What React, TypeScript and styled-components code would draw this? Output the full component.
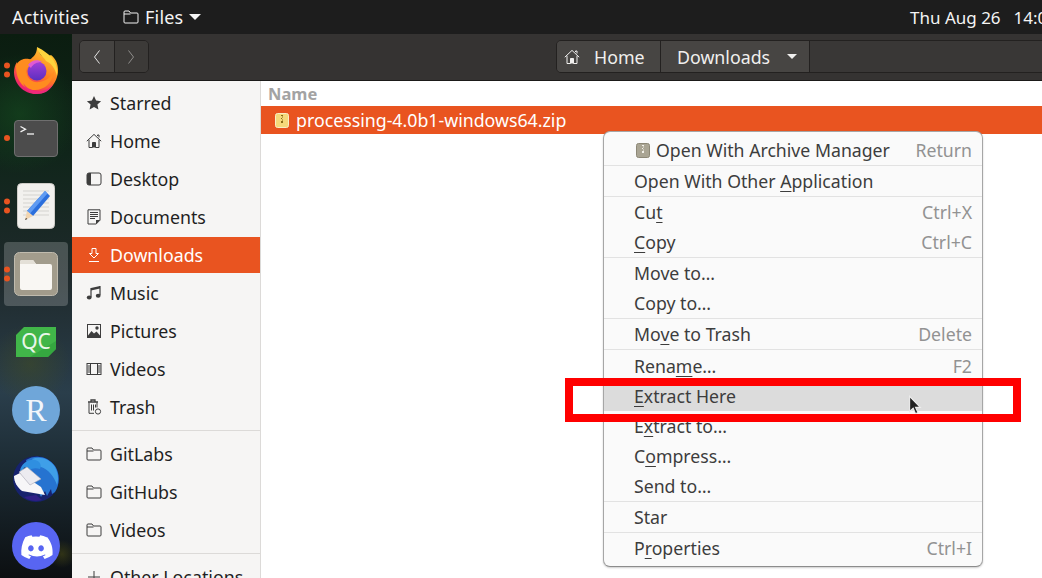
import React from "react";
import styled, { createGlobalStyle } from "styled-components";

const FONT = `"Noto Sans", "Open Sans", "DejaVu Sans", sans-serif`;

const GlobalStyle = createGlobalStyle`
  html, body {
    margin: 0;
    padding: 0;
    background: #000;
    overflow: hidden;
  }
  body {
    font-family: ${FONT};
  }
`;

const Screen = styled.div`
  position: relative;
  width: 1042px;
  height: 578px;
  overflow: hidden;
  display: grid;
  grid-template-rows: 34px 1fr;
  font-family: ${FONT};
`;

const TopBar = styled.div`
  display: grid;
  grid-template-columns: 910px 1fr;
  align-items: center;
  background: #1d1d1d;
  color: #f4f4f4;
  font-size: 17px;
  white-space: nowrap;
  overflow: hidden;
`;

const TopLeft = styled.div`
  display: flex;
  align-items: center;
  padding-left: 12px;
  font-size: 18px;
  letter-spacing: 0.2px;
`;

const Activities = styled.span`
  width: 111px;
`;

const AppMenu = styled.span`
  display: flex;
  align-items: center;
  gap: 6px;
`;

const Caret = styled.span<{ $color?: string }>`
  display: inline-block;
  width: 0;
  height: 0;
  border-left: 6px solid transparent;
  border-right: 6px solid transparent;
  border-top: 6px solid ${(p) => p.$color || "#f4f4f4"};
`;

const PathCaret = styled(Caret)`
  margin-left: 3px;
  border-left-width: 5px;
  border-right-width: 5px;
  border-top-width: 5px;
`;

const Clock = styled.span`
  display: flex;
  gap: 13px;
`;

const Main = styled.div`
  display: flex;
  min-height: 0;
`;

const Dock = styled.div`
  flex: 0 0 72px;
  display: flex;
  flex-direction: column;
  gap: 4px;
  padding: 4px 0 0 4px;
  box-sizing: border-box;
  background:
    radial-gradient(circle at 30px 330px, rgba(70, 80, 30, 0.45), transparent 40px),
    radial-gradient(circle at 62px 520px, rgba(80, 80, 20, 0.5), transparent 14px),
    radial-gradient(circle at 20px 80px, rgba(20, 70, 30, 0.7), transparent 60px),
    linear-gradient(180deg, #0b1d10 0%, #10251a 22%, #1f2a2c 45%, #2a3e4b 66%, #1a2830 82%, #0c0f11 100%);
  overflow: hidden;
`;

const DockItem = styled.div<{ $active?: boolean }>`
  position: relative;
  flex: 0 0 64px;
  width: 64px;
  height: 64px;
  display: flex;
  align-items: center;
  justify-content: center;
  border-radius: 4px;
  background: ${(p) => (p.$active ? "rgba(255, 255, 255, 0.2)" : "transparent")};
`;

const Dots = styled.div`
  position: absolute;
  left: 0;
  top: 50%;
  transform: translateY(-50%);
  display: flex;
  flex-direction: column;
  gap: 3px;
`;

const Dot = styled.span`
  width: 6px;
  height: 6px;
  border-radius: 50%;
  background: #e95420;
`;

const Window = styled.div`
  flex: 1;
  display: flex;
  flex-direction: column;
  min-width: 0;
`;

const HeaderBar = styled.div`
  flex: 0 0 47px;
  box-sizing: border-box;
  display: grid;
  grid-template-columns: 484px 1fr;
  align-items: start;
  padding-top: 6px;
  background: #353332;
  border-bottom: 1px solid #1b1a19;
  color: #f0efee;
  font-size: 17.8px;
`;

const NavGroup = styled.div`
  display: flex;
  width: 70px;
  height: 33px;
  margin-left: 7px;
  box-sizing: border-box;
  border: 1px solid #232120;
  border-radius: 5px;
  overflow: hidden;
`;

const NavButton = styled.div<{ $dim?: boolean }>`
  flex: 1;
  display: flex;
  align-items: center;
  justify-content: center;
  background: #454341;
  color: ${(p) => (p.$dim ? "#8f8e8c" : "#e6e5e4")};
  & + & {
    border-left: 1px solid #232120;
    background: #3c3a38;
  }
`;

const PathBar = styled.div`
  display: flex;
  height: 33px;
  margin-right: -12px;
  box-sizing: border-box;
  border: 1px solid #232120;
  border-radius: 5px;
  background: #393736;
  overflow: hidden;
`;

const PathSegment = styled.div<{ $width: number; $inset: number }>`
  flex: 0 0 ${(p) => p.$width}px;
  box-sizing: border-box;
  display: flex;
  align-items: center;
  background: #474543;
  border-right: 1px solid #232120;
  padding-left: ${(p) => p.$inset}px;
  gap: 14px;
`;

const Body = styled.div`
  flex: 1;
  display: flex;
  min-height: 0;
`;

const Sidebar = styled.div`
  flex: 0 0 189px;
  box-sizing: border-box;
  display: flex;
  flex-direction: column;
  gap: 2px;
  padding-top: 4px;
  background: #f6f5f4;
  border-right: 1px solid #dcdad8;
  overflow: hidden;
  color: #1f1f1f;
  font-size: 17.8px;
`;

const SideRow = styled.div<{ $selected?: boolean }>`
  flex: 0 0 36px;
  display: flex;
  align-items: center;
  gap: 8px;
  padding-left: 14px;
  white-space: nowrap;
  background: ${(p) => (p.$selected ? "#e95420" : "transparent")};
  color: ${(p) => (p.$selected ? "#fff" : "inherit")};
`;

const SideDivider = styled.div`
  flex: 0 0 1px;
  margin: 3px 0;
  background: #dcdad8;
`;

const Content = styled.div`
  flex: 1;
  min-width: 0;
  background: #fff;
`;

const ColumnHeader = styled.div`
  height: 25px;
  display: flex;
  align-items: center;
  padding-left: 7px;
  font-size: 16.5px;
  font-weight: 700;
  color: #a3a3a3;
`;

const FileRow = styled.div`
  height: 28px;
  display: flex;
  align-items: center;
  gap: 7px;
  padding-left: 14px;
  background: #e95420;
  color: #fff;
  font-size: 17.75px;
  white-space: nowrap;
`;

const ContextMenu = styled.div`
  position: absolute;
  left: 603px;
  top: 131px;
  width: 380px;
  box-sizing: border-box;
  padding: 3px 0;
  background: #fafafa;
  border: 1px solid #a6a6a6;
  border-bottom-color: #8c8c8c;
  border-radius: 7px;
  box-shadow: 0 1px 2px rgba(0, 0, 0, 0.2);
  color: #3d3d3d;
  font-size: 17.7px;
`;

const MenuRow = styled.div<{ $hover?: boolean; $tall?: boolean }>`
  height: ${(p) => (p.$tall ? 31 : 30)}px;
  display: flex;
  align-items: center;
  padding: 0 10px 0 30px;
  white-space: nowrap;
  background: ${(p) => (p.$hover ? "#dcdcdc" : "transparent")};
  u {
    text-underline-offset: 3px;
    text-decoration-thickness: 1px;
  }
`;

const MenuIcon = styled.span`
  display: flex;
  width: 22px;
  padding-left: 2px;
  box-sizing: border-box;
`;

const Hint = styled.span`
  margin-left: auto;
  color: #929292;
`;

const MenuDivider = styled.div`
  height: 1px;
  background: #e2e2e2;
`;

const Highlight = styled.div`
  position: absolute;
  left: 565px;
  top: 378px;
  width: 456px;
  height: 44px;
  box-sizing: border-box;
  border: 8px solid #ff0000;
`;

const Pointer = styled.svg`
  position: absolute;
  left: 908px;
  top: 395px;
`;

type IconProps = { color?: string };

const Icon = ({ children }: { children: React.ReactNode }) => (
  <svg width="16" height="16" viewBox="0 0 16 16" style={{ flex: "none" }}>
    {children}
  </svg>
);

const StarIcon = () => (
  <Icon>
    <path d="M8 1l2.1 4.6 5 .6-3.7 3.4 1 4.9L8 12.1l-4.4 2.4 1-4.9L.9 6.2l5-.6z" fill="#3d3d3d" />
  </Icon>
);

const HomeIcon = ({ color = "#3d3d3d" }: IconProps) => (
  <Icon>
    <path d="M.8 8.2L8 1.4l7.2 6.8M3 6.8v7.7h3.5V9.5h3v5H13V6.8M11.5 3V2H13v2.5" fill="none" stroke={color} strokeWidth="1" />
    <path d="M6.5 9.5h3v5h-3z" fill={color} />
  </Icon>
);

const DesktopIcon = () => (
  <Icon>
    <rect x="1" y="2" width="14" height="12" rx="2" fill="none" stroke="#3d3d3d" />
    <path d="M3 2h2v12H3a2 2 0 0 1-2-2V4a2 2 0 0 1 2-2z" fill="#3d3d3d" />
  </Icon>
);

const DocumentIcon = () => (
  <Icon>
    <path d="M2 .8h12v10.4L10.2 15H2z" fill="none" stroke="#3d3d3d" />
    <path d="M4 3.5h8M4 5.5h8M4 7.5h8M4 9.5h5" stroke="#3d3d3d" />
    <path d="M10 15v-4h4z" fill="#3d3d3d" />
  </Icon>
);

const DownloadIcon = () => (
  <Icon>
    <path d="M6 1.5h4v5h2.5L8 11 3.5 6.5H6zM3 14.5h10" fill="none" stroke="#fff" />
  </Icon>
);

const MusicIcon = () => (
  <Icon>
    <path d="M5 3l9-2v2.5l-9 2z" fill="#3d3d3d" />
    <path d="M5 3v9M14 1v9" stroke="#3d3d3d" strokeWidth="1.2" fill="none" />
    <ellipse cx="3.2" cy="12.6" rx="2.4" ry="2" fill="#3d3d3d" />
    <ellipse cx="12.2" cy="10.8" rx="2.4" ry="2" fill="#3d3d3d" />
  </Icon>
);

const PictureIcon = () => (
  <Icon>
    <rect x="1.5" y="1.5" width="13" height="13" fill="none" stroke="#3d3d3d" />
    <path d="M2 12.5L5.5 8 8 10.5l2.5-2 3.5 4V14H2z" fill="#3d3d3d" />
    <circle cx="11" cy="5" r="1.7" fill="#3d3d3d" />
  </Icon>
);

const VideoIcon = () => (
  <Icon>
    <rect x="1" y="2.5" width="14" height="11" fill="none" stroke="#3d3d3d" />
    <path d="M4.5 2.5v11M11.5 2.5v11" stroke="#3d3d3d" />
    <path d="M1.5 5h3M1.500 7h3M1.5 9h3M1.5 11h3M11.5 5h3M11.5 7h3M11.5 9h3M11.5 11h3" stroke="#3d3d3d" />
  </Icon>
);

const TrashIcon = () => (
  <Icon>
    <path d="M2 3h10M5 3V1h4v2" fill="none" stroke="#3d3d3d" strokeWidth="1.3" />
    <path d="M3 3.5v10.8h5M11 3.5v5" fill="none" stroke="#3d3d3d" />
    <path d="M5.5 5.5v6M7.5 5.5v6M9.5 5.5v3" stroke="#3d3d3d" />
    <circle cx="12" cy="12.5" r="2.6" fill="none" stroke="#3d3d3d" />
  </Icon>
);

const FolderIcon = ({ color = "#3d3d3d" }: IconProps) => (
  <Icon>
    <path d="M1 4V3a1 1 0 0 1 1-1h4l1.5 2H14a1 1 0 0 1 1 1v8a1 1 0 0 1-1 1H2a1 1 0 0 1-1-1z M1 5h6.5" fill="none" stroke={color} />
  </Icon>
);

const PlusIcon = () => (
  <Icon>
    <path d="M8 2v12M2 8h12" stroke="#3d3d3d" />
  </Icon>
);

const ChevronLeft = () => (
  <svg width="8" height="16" viewBox="0 0 8 16">
    <path d="M6.5 1.5L1.5 8l5 6.5" fill="none" stroke="currentColor" />
  </svg>
);

const ChevronRight = () => (
  <svg width="8" height="16" viewBox="0 0 8 16">
    <path d="M1.5 1.5l5 6.5-5 6.5" fill="none" stroke="currentColor" />
  </svg>
);

const ZipIcon = () => (
  <svg width="14" height="15" viewBox="0 0 14 15" style={{ flex: "none" }}>
    <rect x="0.5" y="0.5" width="13" height="14" rx="2" fill="#f5d97a" stroke="#f8eec4" />
    <path d="M6 2h2v1H6zM7 3.5h1v1H7zM6 5h1v1H6zM7 6.5h1v1H7zM6 8h2v2H6z" fill="#8a6d18" />
  </svg>
);

const ArchiveIcon = () => (
  <svg width="14" height="15" viewBox="0 0 14 15" style={{ flex: "none" }}>
    <rect x="0.5" y="0.5" width="13" height="14" rx="2" fill="#aaa594" stroke="#8d8877" />
    <path d="M6 2h2v1H6zM7 3.5h1v1H7zM6 5h1v1H6zM7 6.5h1v1H7zM6 8h2v2H6z" fill="#f3f1ea" />
  </svg>
);

const FirefoxLogo = () => (
  <svg width="46" height="48" viewBox="0 0 46 48">
    <defs>
      <linearGradient id="ffBody" x1="0.7" y1="0.1" x2="0.2" y2="1">
        <stop offset="0" stopColor="#ffbd2e" />
        <stop offset="0.45" stopColor="#ff7a22" />
        <stop offset="0.8" stopColor="#f5305f" />
        <stop offset="1" stopColor="#e31587" />
      </linearGradient>
      <linearGradient id="ffGlobe" x1="0.5" y1="0" x2="0.5" y2="1">
        <stop offset="0" stopColor="#a53fd8" />
        <stop offset="1" stopColor="#5b2fc0" />
      </linearGradient>
    </defs>
    <path d="M24 1c3 4 1 8 8 10 3-1 6-2 6-2 5 4 7 9 7 15 0 13-10 24-22 24C11 48 1 38 1 26c0-4 1-7 3-10l1 4c1-3 3-5 6-7 2 0 3 1 4 2 4-3 9-6 9-14z" fill="url(#ffBody)" />
    <path d="M24 1c6 3 14 8 17 14 3 5 4 10 3 15-2-8-6-13-11-15-2-4-8-7-9-14z" fill="#ffd43d" />
    <circle cx="24" cy="25" r="9.5" fill="url(#ffGlobe)" />
    <path d="M3 20c2-6 8-8 13-7 6 1 5 5 1 7-4 2-4 5-3 8 1 5 6 9 12 8 7-1 12-5 15-11-1 11-9 19-19 19C10 44 3 34 3 20z" fill="#ff8c1f" />
    <path d="M10 37c4 6 11 9 18 8 5-1 9-3 12-7-3 7-9 10-17 10-5 0-10-4-13-11z" fill="#ee2a7b" />
    <path d="M15 19c3-5 10-6 14-3-5 0-9 2-11 6z" fill="#e05ad2" />
  </svg>
);

const TerminalLogo = () => (
  <svg width="44" height="37" viewBox="0 0 44 37">
    <rect x="0.5" y="0.5" width="43" height="36" rx="3.5" fill="#4c4c4c" stroke="#6f6f6f" />
    <path d="M6.5 6.5l5 2.7-5 2.7" fill="none" stroke="#f4f4f4" strokeWidth="1.3" />
    <path d="M13 14h7" stroke="#f4f4f4" strokeWidth="1.3" />
  </svg>
);

const GeditLogo = () => (
  <svg width="38" height="46" viewBox="0 0 38 46">
    <rect x="0.5" y="0.5" width="37" height="45" rx="4" fill="#f2f1ee" stroke="#cfcdc8" />
    <path d="M6 8h26M6 12h26M6 16h26M6 20h26M6 24h26M6 28h26M6 32h26" stroke="#d4d3cf" />
    <path d="M28 8l5 5-17 20-6-5z" fill="#2b6fdc" />
    <path d="M28 8l2.5 2.5L13 30.5 10 28z" fill="#5f9bf2" />
    <path d="M10 28l6 5-8 4z" fill="#f1d5b0" />
    <path d="M9 35l-1 2 2.4-1z" fill="#333" />
  </svg>
);

const FilesLogo = () => (
  <svg width="44" height="44" viewBox="0 0 44 44">
    <rect x="0.5" y="0.5" width="43" height="43" rx="5" fill="#a29c8c" stroke="#c0bbae" />
    <path d="M6 10a2 2 0 0 1 2-2h11l3 4h14a2 2 0 0 1 2 2v22a2 2 0 0 1-2 2H8a2 2 0 0 1-2-2z" fill="#f9f7f3" />
    <path d="M6 10a2 2 0 0 1 2-2h11l3 4H6z" fill="#e4e0d7" />
  </svg>
);

const QtLogo = () => (
  <svg width="40" height="30" viewBox="0 0 40 30">
    <path d="M8 0h32v22l-8 8H0V8z" fill="#41b649" />
    <path d="M40 14v8l-8 8H14z" fill="#2d9d3a" opacity="0.6" />
    <text x="20" y="22" textAnchor="middle" fontFamily={FONT} fontSize="21" fill="#e9f7ea">QC</text>
  </svg>
);

const RLogo = () => (
  <svg width="48" height="48" viewBox="0 0 48 48">
    <circle cx="24" cy="24" r="24" fill="#6fa6d9" />
    <text x="24" y="35" textAnchor="middle" fontFamily={`"Liberation Serif", serif`} fontSize="32" fill="#f3f6fa">R</text>
  </svg>
);

const ThunderbirdLogo = () => (
  <svg width="48" height="48" viewBox="0 0 48 48">
    <circle cx="24" cy="25" r="23" fill="#16226e" />
    <path d="M14 6c9-6 22-4 29 6 5 8 5 18 0 26l-3 2-1-5-4 7-2-5-4 6-3-6-6-14z" fill="#2673d0" />
    <path d="M20 5c8-3 18 0 23 8 3 6 4 12 2 18-3-9-9-16-16-18-3-1-6-4-9-8z" fill="#3f9fe8" />
    <path d="M8 17c1-7 8-12 15-11 5 1 7 5 5 9-6-2-12 0-15 5z" fill="#2f8fe0" />
    <circle cx="13" cy="15" r="1.4" fill="#15204d" />
    <path d="M2 22l6-3 21 14 4 8-23-4C5 33 2 28 2 22z" fill="#f7f6f8" />
    <path d="M7 18l8-5 14 12-11 6z" fill="#ecebf0" stroke="#a9a8b5" strokeWidth="0.6" />
    <path d="M12 43c5 4 12 5 18 3l-6-5z" fill="#2f1f86" />
  </svg>
);

const DiscordLogo = () => (
  <svg width="48" height="48" viewBox="0 0 48 48">
    <circle cx="24" cy="24" r="24" fill="#5865f2" />
    <path
      d="M34.6 15.2a26 26 0 0 0-6.4-2l-.8 1.6a24 24 0 0 0-7 0l-.8-1.6a26 26 0 0 0-6.4 2C9.9 21.3 8.8 27.2 9.4 33a26 26 0 0 0 7.9 4l1.7-2.700a17 17 0 0 1-2.7-1.3l.7-.5a18.600 18.600 0 0 0 15.900 0l.7.5a17 17 0 0 1-2.700 1.300l1.700 2.700a26 26 0 0 0 7.900-4c.7-6.700-1.100-12.500-5.200-17.800zM18.900 29.400c-1.500 0-2.800-1.400-2.800-3.100s1.200-3.100 2.800-3.100 2.800 1.400 2.800 3.100-1.200 3.100-2.800 3.100zm10.200 0c-1.500 0-2.800-1.400-2.800-3.100s1.200-3.100 2.800-3.100 2.800 1.400 2.800 3.100-1.300 3.100-2.800 3.100z"
      fill="#fff"
    />
  </svg>
);

const dockApps: { logo: React.ReactNode; dots: number; active?: boolean }[] = [
  { logo: <FirefoxLogo />, dots: 2 },
  { logo: <TerminalLogo />, dots: 1 },
  { logo: <GeditLogo />, dots: 2 },
  { logo: <FilesLogo />, dots: 2, active: true },
  { logo: <QtLogo />, dots: 0 },
  { logo: <RLogo />, dots: 0 },
  { logo: <ThunderbirdLogo />, dots: 0 },
  { logo: <DiscordLogo />, dots: 0 },
];

const places = [
  { icon: <StarIcon />, label: "Starred" },
  { icon: <HomeIcon />, label: "Home" },
  { icon: <DesktopIcon />, label: "Desktop" },
  { icon: <DocumentIcon />, label: "Documents" },
  { icon: <DownloadIcon />, label: "Downloads", selected: true },
  { icon: <MusicIcon />, label: "Music" },
  { icon: <PictureIcon />, label: "Pictures" },
  { icon: <VideoIcon />, label: "Videos" },
  { icon: <TrashIcon />, label: "Trash" },
];

const bookmarks = ["GitLabs", "GitHubs", "Videos"];

export default function App() {
  return (
    <Screen>
      <GlobalStyle />
      <TopBar>
        <TopLeft>
          <Activities>Activities</Activities>
          <AppMenu>
            <FolderIcon color="#f4f4f4" />
            Files
            <Caret />
          </AppMenu>
        </TopLeft>
        <Clock>
          <span>Thu Aug 26</span>
          <span>14:00</span>
        </Clock>
      </TopBar>
      <Main>
        <Dock>
          {dockApps.map((app, i) => (
            <DockItem key={i} $active={app.active}>
              {app.dots > 0 && (
                <Dots>
                  {Array.from({ length: app.dots }).map((_, d) => (
                    <Dot key={d} />
                  ))}
                </Dots>
              )}
              {app.logo}
            </DockItem>
          ))}
        </Dock>
        <Window>
          <HeaderBar>
            <NavGroup>
              <NavButton>
                <ChevronLeft />
              </NavButton>
              <NavButton $dim>
                <ChevronRight />
              </NavButton>
            </NavGroup>
            <PathBar>
              <PathSegment $width={104} $inset={7}>
                <HomeIcon color="#f0efee" />
                Home
              </PathSegment>
              <PathSegment $width={149} $inset={16}>
                Downloads
                <PathCaret $color="#f0efee" />
              </PathSegment>
            </PathBar>
          </HeaderBar>
          <Body>
            <Sidebar>
              {places.map((p) => (
                <SideRow key={p.label} $selected={p.selected}>
                  {p.icon}
                  {p.label}
                </SideRow>
              ))}
              <SideDivider />
              {bookmarks.map((b) => (
                <SideRow key={b}>
                  <FolderIcon />
                  {b}
                </SideRow>
              ))}
              <SideDivider />
              <SideRow>
                <PlusIcon />
                Other Locations
              </SideRow>
            </Sidebar>
            <Content>
              <ColumnHeader>Name</ColumnHeader>
              <FileRow>
                <ZipIcon />
                processing-4.0b1-windows64.zip
              </FileRow>
            </Content>
          </Body>
        </Window>
      </Main>
      <ContextMenu>
        <MenuRow>
          <MenuIcon>
            <ArchiveIcon />
          </MenuIcon>
          Open With Archive Manager
          <Hint>Return</Hint>
        </MenuRow>
        <MenuDivider />
        <MenuRow>
          <span>Open With Other <u>A</u>pplication</span>
        </MenuRow>
        <MenuDivider />
        <MenuRow>
          <span>Cu<u>t</u></span>
          <Hint>Ctrl+X</Hint>
        </MenuRow>
        <MenuRow>
          <span><u>C</u>opy</span>
          <Hint>Ctrl+C</Hint>
        </MenuRow>
        <MenuDivider />
        <MenuRow>Move to…</MenuRow>
        <MenuRow>Copy to…</MenuRow>
        <MenuDivider />
        <MenuRow>
          <span>Mo<u>v</u>e to Trash</span>
          <Hint>Delete</Hint>
        </MenuRow>
        <MenuDivider />
        <MenuRow $tall>
          <span>Rena<u>m</u>e…</span>
          <Hint>F2</Hint>
        </MenuRow>
        <MenuRow $hover>
          <span><u>E</u>xtract Here</span>
        </MenuRow>
        <MenuRow>
          <span>E<u>x</u>tract to…</span>
        </MenuRow>
        <MenuRow>
          <span>C<u>o</u>mpress…</span>
        </MenuRow>
        <MenuRow>Send to…</MenuRow>
        <MenuDivider />
        <MenuRow>Star</MenuRow>
        <MenuDivider />
        <MenuRow>
          <span>P<u>r</u>operties</span>
          <Hint>Ctrl+I</Hint>
        </MenuRow>
      </ContextMenu>
      <Pointer width="14" height="20" viewBox="0 0 13 18">
        <path d="M1.5 1v14l3.3-3 2.2 5 2.2-1-2.2-4.800h4.400z" fill="#222" stroke="#eee" strokeWidth="1" />
      </Pointer>
      <Highlight />
    </Screen>
  );
}
